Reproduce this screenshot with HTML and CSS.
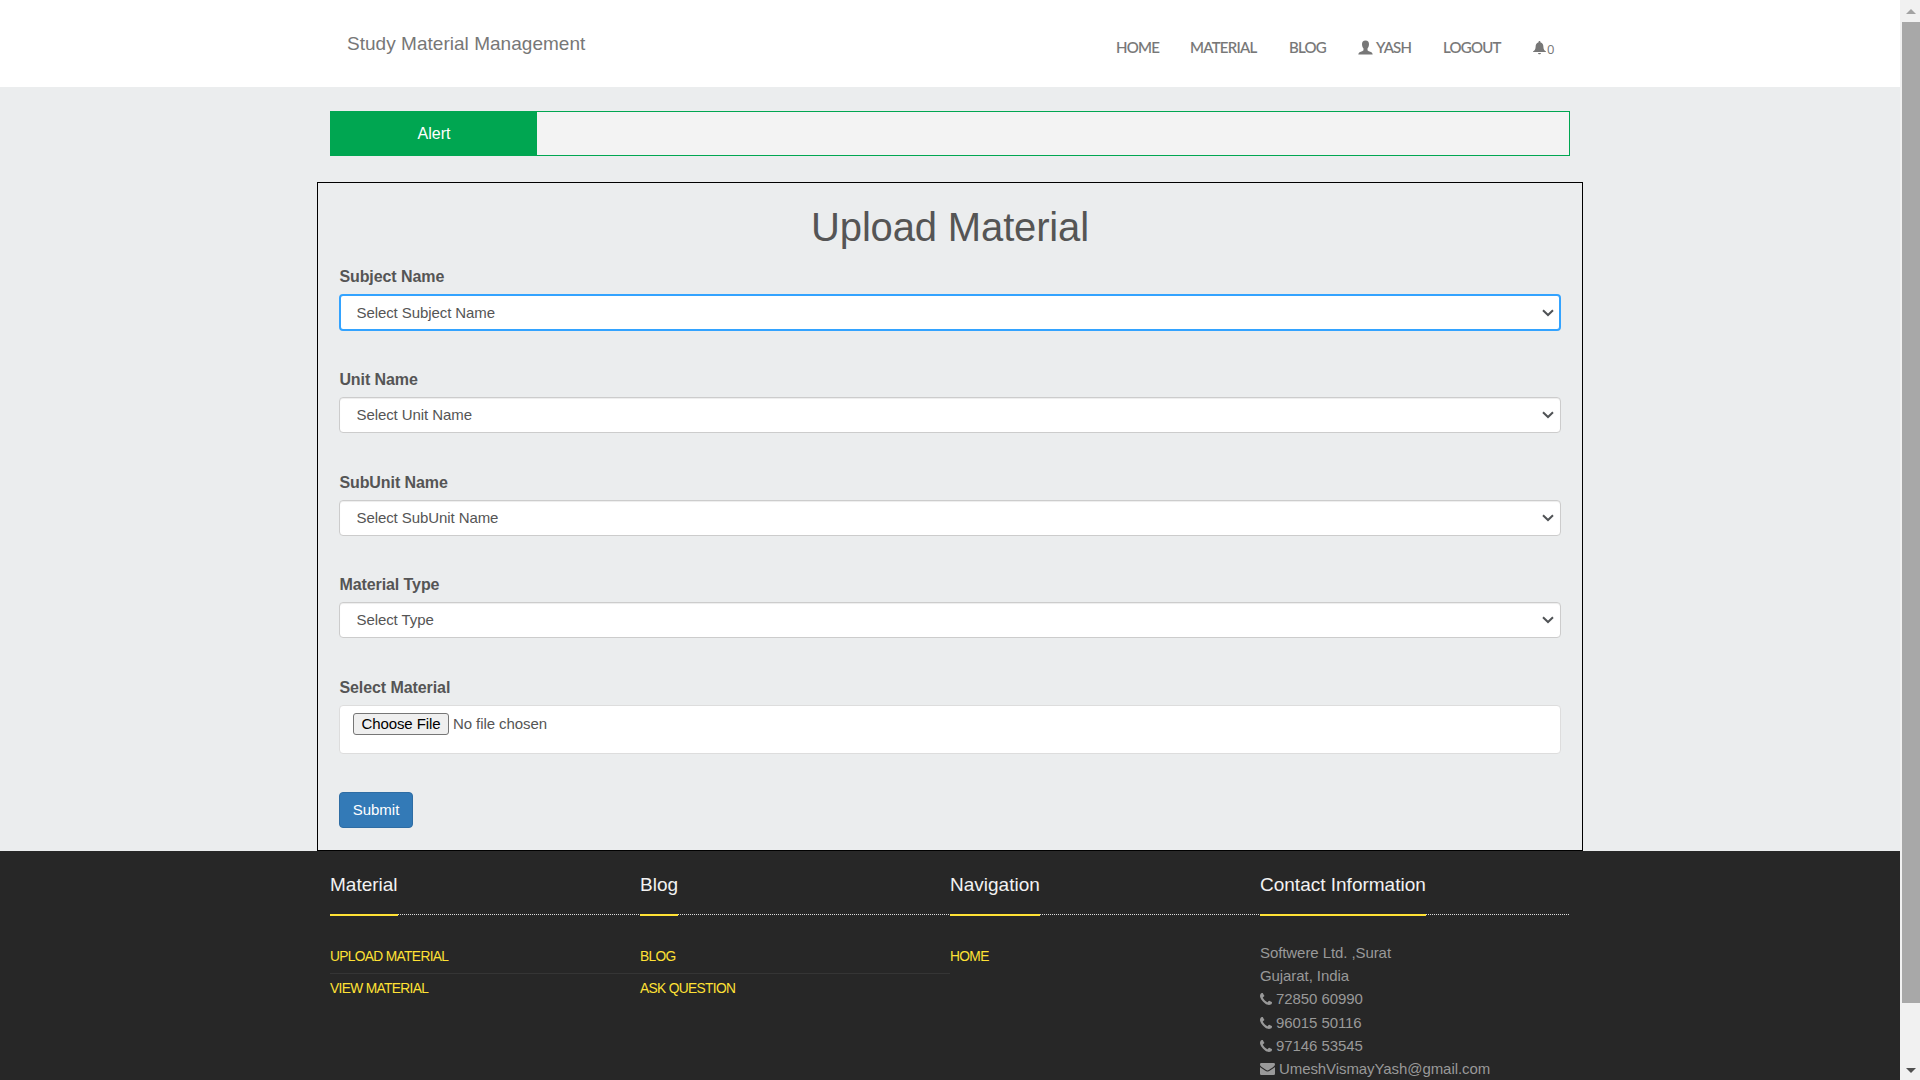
FILE: index.html
```html
<!DOCTYPE html>
<html lang="en">
<head>
<meta charset="utf-8">
<title>Study Material Management</title>
<link rel="stylesheet" href="styles.css">
</head>
<body>
<svg class="defs" width="0" height="0" aria-hidden="true">
  <symbol id="chevron" viewBox="0 0 12 8"><path d="M1 1.2 L6 6 L11 1.2" fill="none" stroke="#505356" stroke-width="2"/></symbol>
  <symbol id="phone" viewBox="0 0 1408 1408"><path fill="currentColor" d="M1408 1112q0 27-10 70.500t-21 68.500q-21 50-122 106-94 51-186 51-27 0-53-3.500t-57.500-12.500-47-14.500-55.500-20.500-49-18q-98-35-175-83-127-79-264-216t-216-264q-48-77-83-175-3-9-18-49t-20.500-55.500-14.500-47-12.500-57.500-3.500-53q0-92 51-186 56-101 106-122 25-11 68.500-21t70.500-10q14 0 21 3 18 6 53 76 11 19 30 54t35 63.500 31 53.500q3 4 17.500 25t21.500 35.500 7 28.500q0 20-28.500 50t-62 55-62 53-28.500 46q0 9 5 22.500t8.500 20.500 14 24 11.500 19q76 137 174 235t235 174q2 1 19 11.500t24 14 20.500 8.500 22.500 5q18 0 46-28.500t53-62 55-62 50-28.500q14 0 28.500 7t35.500 21.500 25 17.500q25 15 53.500 31t63.500 35 54 30q70 35 76 53 3 7 3 21z"/></symbol>
</svg>
<div class="window">
  <div class="page">
    <header class="topbar">
      <a class="brand">Study Material Management</a>
      <nav class="menu">
        <a>HOME</a>
        <a>MATERIAL</a>
        <a>BLOG</a>
        <a class="user"><svg width="15" height="15" viewBox="0 0 15 15"><path fill="currentColor" d="M7.500 0.500C9.900 0.500 11.100 2 11 4.300C10.900 6.500 10.200 7.700 9.500 8.500V9.900C9.500 10.600 10.400 10.900 11.600 11.400C13.400 12 14.600 12.600 14.700 14.500H0.300C0.400 12.600 1.600 12 3.400 11.400C4.600 10.900 5.500 10.600 5.500 9.900V8.500C4.800 7.700 4.100 6.500 4 4.300C3.900 2 5.100 0.500 7.500 0.500Z"/></svg>YASH</a>
        <a class="logout">LOGOUT</a>
        <a class="bell"><svg width="13" height="14" viewBox="0 0 13 14"><path fill="currentColor" d="M6.500 0C7.200 0 7.500 .5 7.400 1.200C9.700 1.800 10.300 3.600 10.400 6C10.500 8.500 11.300 9.400 13 10.500V11H0V10.500C1.700 9.400 2.500 8.500 2.600 6C2.700 3.600 3.300 1.800 5.600 1.200C5.500 .5 5.800 0 6.500 0ZM5 12H8C7.900 12.900 7.300 13.300 6.500 13.300C5.700 13.300 5.100 12.900 5 12Z"/></svg><span>0</span></a>
      </nav>
    </header>
    <main>
      <div class="alert"><div class="alert-title">Alert</div></div>
      <form class="panel">
        <h1>Upload Material</h1>
        <div class="field">
          <label>Subject Name</label>
          <div class="picker focused"><select><option>Select Subject Name</option></select><svg><use href="#chevron"/></svg></div>
        </div>
        <div class="field">
          <label>Unit Name</label>
          <div class="picker"><select><option>Select Unit Name</option></select><svg><use href="#chevron"/></svg></div>
        </div>
        <div class="field">
          <label>SubUnit Name</label>
          <div class="picker"><select><option>Select SubUnit Name</option></select><svg><use href="#chevron"/></svg></div>
        </div>
        <div class="field">
          <label>Material Type</label>
          <div class="picker"><select><option>Select Type</option></select><svg><use href="#chevron"/></svg></div>
        </div>
        <div class="field">
          <label>Select Material</label>
          <div class="file"><button type="button">Choose File</button><span>No file chosen</span></div>
        </div>
        <button class="submit" type="button">Submit</button>
      </form>
    </main>
    <footer class="footer">
      <section>
        <h2><span>Material</span></h2>
        <ul><li>UPLOAD MATERIAL</li><li>VIEW MATERIAL</li></ul>
      </section>
      <section>
        <h2><span>Blog</span></h2>
        <ul><li>BLOG</li><li>ASK QUESTION</li></ul>
      </section>
      <section>
        <h2><span>Navigation</span></h2>
        <ul><li>HOME</li></ul>
      </section>
      <section>
        <h2><span>Contact Information</span></h2>
        <address>
          <div>Softwere Ltd. ,Surat</div>
          <div>Gujarat, India</div>
          <div><svg class="phone"><use href="#phone"/></svg>72850 60990</div>
          <div><svg class="phone"><use href="#phone"/></svg>96015 50116</div>
          <div><svg class="phone"><use href="#phone"/></svg>97146 53545</div>
          <div><svg class="mail" viewBox="0 0 15 12"><path fill="currentColor" d="M1.300 0H13.700Q15 0 15 1.300C15 2.400 14.200 3.300 13.300 3.900L9.200 6.700C8.700 7.100 8 7.500 7.500 7.500S6.300 7.100 5.800 6.700L1.700 3.900C1 3.400 0 2.300 0 1.400Q0 0 1.300 0ZM0 4C.3 4.300.6 4.500.9 4.800L5 7.600C5.800 8.200 6.600 8.600 7.500 8.600S9.200 8.200 10 7.600L14.100 4.800C14.400 4.500 14.700 4.300 15 4V10.700Q15 12 13.700 12H1.300Q0 12 0 10.700Z"/></svg>UmeshVismayYash@gmail.com</div>
        </address>
      </section>
    </footer>
  </div>
  <div class="scrollbar">
    <svg class="arrow" viewBox="0 0 10 5"><path fill="#a3a3a3" d="M0 5L5 0L10 5Z"/></svg>
    <div class="thumb"></div>
    <svg class="arrow down" viewBox="0 0 10 5"><path fill="#505050" d="M0 0L5 5L10 0Z"/></svg>
  </div>
</div>
</body>
</html>
```
FILE: styles.css
```css
* { box-sizing: border-box; }
body { margin: 0; overflow: hidden; font: 15px/20px "Liberation Sans", Arial, sans-serif; color: #555; }
.defs { display: none; }
.window { display: flex; height: 1080px; overflow: hidden; }
.page { width: 1900px; height: 1080px; display: flex; flex-direction: column; background: #ebedee; overflow: hidden; }

.topbar { height: 87px; flex: none; background: #fff; color: #777; display: flex; justify-content: space-between; padding: 0 330px 0 347px; }
.brand { font-size: 19px; line-height: 24px; letter-spacing: .03px; padding-top: 32px; }
.menu { display: grid; grid-template-columns: 74px 99px 69px 85px 90px 37px; width: 454px; padding-top: 37px; font: 500 15px/20px Lato, sans-serif; -webkit-text-stroke: .1px #777; white-space: nowrap; }
.menu a { letter-spacing: -.75px; }
.user { display: flex; gap: 3px; }
.user svg { margin-top: 3px; }
.bell { display: flex; gap: 1px; }
.bell svg { margin-top: 4px; }
.bell span { font-family: "Open Sans", sans-serif; font-size: 13px; line-height: 24px; -webkit-text-stroke: 0; }

main { flex: none; height: 764px; padding-top: 24px; }
.alert { width: 1240px; height: 45px; margin: 0 330px 26px; border: 1px solid #00a651; background: #f3f3f3; }
.alert-title { width: 206px; height: 43px; background: #00a651; color: #fff; font-size: 16px; line-height: 43px; text-align: center; }
.panel { width: 1266px; height: 669px; margin-left: 317px; border: 1px solid #000; padding: 21px 21px 0; }
h1 { margin: 0 0 17px; font-size: 40px; font-weight: 400; line-height: 46px; letter-spacing: -.15px; text-align: center; }
.field { height: 102.800px; }
.field label { display: block; height: 27px; font-weight: 700; font-size: 16px; line-height: 20px; letter-spacing: -.08px; padding-left: .4px; }
.picker { display: grid; align-items: center; height: 36px; }
.picker select, .picker svg { grid-area: 1 / 1; }
.picker select { appearance: none; width: 100%; height: 36px; margin: 0; padding: 0 16.500px; border: 1px solid #ccc; border-radius: 4px; outline: 0; background: #fff; box-shadow: inset 0 1px 1px rgba(0,0,0,.075); color: #555; font: inherit; letter-spacing: -.08px; opacity: 1; }
.picker.focused select { height: 37px; border: 2px solid #33a3ff; padding: 0 15.500px; box-shadow: none; }
.picker svg { width: 12px; height: 8px; justify-self: end; margin-right: 7px; pointer-events: none; }
.file { height: 49px; border: 1px solid #ddd; border-radius: 4px; background: #fff; display: flex; align-items: flex-start; gap: 4px; padding: 7px 13px; letter-spacing: -.08px; }
.file button { width: 96px; height: 22px; border: 1px solid #767676; border-radius: 3px; background: #efefef; color: #000; font: inherit; letter-spacing: inherit; line-height: 20px; padding: 0; }
.file span { line-height: 22px; }
.submit { display: block; width: 74px; height: 36px; margin-top: 11px; padding: 0; background: #337ab7; border: 1px solid #2e6da4; border-radius: 4px; color: #fff; font: inherit; }

.footer { flex: 1; min-height: 0; overflow: hidden; background: #272727; padding: 0 330px; display: grid; grid-template-columns: repeat(4, 310px); }
.footer h2 { margin: 0; height: 65px; padding-top: 22px; font-size: 19px; font-weight: 400; line-height: 24px; color: #f2f2f2; background: repeating-linear-gradient(90deg, #ddd 0 1px, transparent 1px 2px) left 0 bottom 1px / 100% 1px no-repeat; }
.footer h2 span { display: inline-block; height: 43px; border-bottom: 2px solid #ffe135; }
.footer ul { list-style: none; margin: 26px 0 0; padding: 0; color: #ffe135; font-size: 13.750px; letter-spacing: -.650px; }
.footer li { height: 32px; line-height: 29px; }
.footer li + li { border-top: 1px solid #353535; line-height: 30px; margin-top: -1px; }
address { font-style: normal; line-height: 23.300px; letter-spacing: -.08px; color: #999; margin-top: 24.800px; white-space: nowrap; }
address svg { vertical-align: -1px; }
.phone { width: 12px; height: 12px; margin-right: 4px; }
.mail { width: 15px; height: 12px; margin-right: 4px; }

.scrollbar { width: 20px; height: 1080px; background: #f1f1f1; display: flex; flex-direction: column; padding-left: 2px; }
.arrow { width: 10px; height: 5px; margin: 9px 0 8px 4px; flex: none; }
.thumb { height: 981px; background: #a8a8a8; flex: none; }
.arrow.down { margin: 65px 0 0 4px; }
```
